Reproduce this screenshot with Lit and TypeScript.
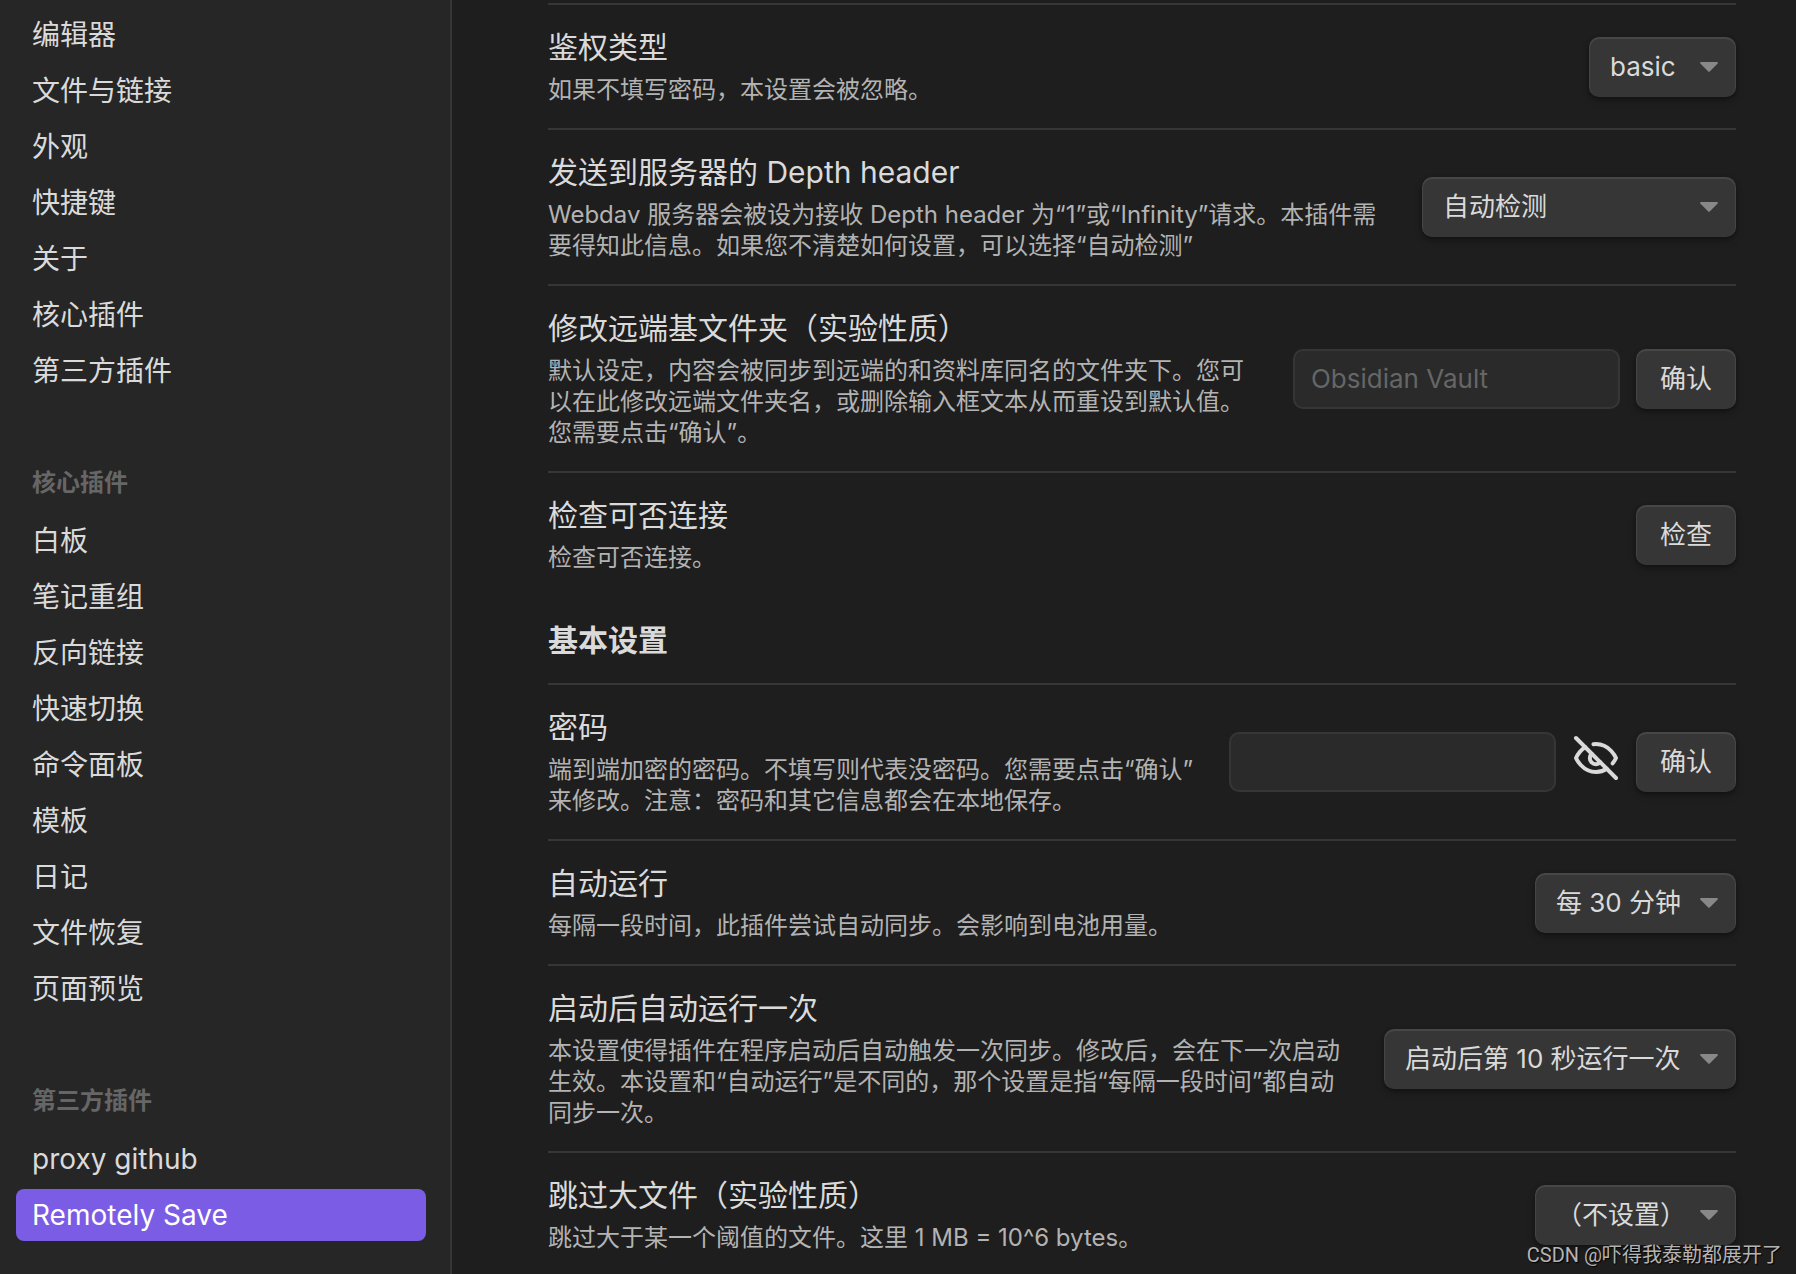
import { LitElement, html, css, svg, nothing, type TemplateResult } from "lit";
import { customElement, property } from "lit/decorators.js";

interface NavSection {
  title?: string;
  items: string[];
}

const NAV: NavSection[] = [
  { items: ["编辑器", "文件与链接", "外观", "快捷键", "关于", "核心插件", "第三方插件"] },
  {
    title: "核心插件",
    items: ["白板", "笔记重组", "反向链接", "快速切换", "命令面板", "模板", "日记", "文件恢复", "页面预览"],
  },
  { title: "第三方插件", items: ["proxy github", "Remotely Save"] },
];

const arrow = svg`<path d="M1 0h16a1 1 0 0 1 .7 1.6l-8 8a1 1 0 0 1-1.4 0l-8-8A1 1 0 0 1 1 0z" fill="#888888" />`;

@customElement("settings-nav")
class SettingsNav extends LitElement {
  @property() active = "";

  static styles = css`
    :host {
      display: block;
      box-sizing: border-box;
      padding: 9px 24px 32px 16px;
      background: #262626;
      border-right: 2px solid #363636;
      overflow: hidden;
    }
    .section + .section {
      margin-top: 70px;
    }
    .title {
      margin: 0 0 17px;
      padding: 0 16px;
      font-size: 24px;
      line-height: 31px;
      font-weight: 600;
      color: #666666;
    }
    .list {
      display: flex;
      flex-direction: column;
      gap: 4px;
      margin: 0;
      padding: 0;
      list-style: none;
    }
    .item {
      display: block;
      width: 100%;
      margin: 0;
      padding: 8px 16px;
      border: 0;
      border-radius: 8px;
      background: none;
      color: #dadada;
      font: inherit;
      font-size: 28px;
      line-height: 36px;
      text-align: left;
      cursor: pointer;
    }
    .item.active {
      background: #7a5ce5;
      color: #ffffff;
    }
  `;

  render() {
    return html`<nav>
      ${NAV.map(
        (section) => html`<div class="section">
          ${section.title ? html`<h2 class="title">${section.title}</h2>` : nothing}
          <ul class="list">
            ${section.items.map(
              (item) => html`<li>
                <button
                  class="item ${item === this.active ? "active" : ""}"
                  type="button"
                  aria-current=${item === this.active ? "page" : "false"}
                >${item}</button>
              </li>`
            )}
          </ul>
        </div>`
      )}
    </nav>`;
  }
}

@customElement("app-root")
class AppRoot extends LitElement {
  static styles = css`
    :host {
      display: grid;
      grid-template-columns: 452px minmax(0, 1fr);
      position: relative;
      height: 100vh;
      overflow: hidden;
      background: #1e1e1e;
      color: #dadada;
      font-family: Inter, "Noto Sans CJK SC", sans-serif;
      text-spacing-trim: space-all;
    }
    .content {
      padding: 3px 60px 0 96px;
      overflow: hidden;
    }
    .row {
      display: flex;
      align-items: center;
      gap: 32px;
      padding: 23px 0;
      border-top: 2px solid #363636;
    }
    .info {
      flex: 1;
      min-width: 0;
    }
    .name {
      display: block;
      font-size: 30px;
      line-height: 38px;
    }
    .desc {
      margin: 8px 0 0;
      font-size: 24px;
      line-height: 31px;
      color: #b3b3b3;
    }
    .heading {
      margin: 0;
      padding: 25px 0 23px;
      font-size: 30px;
      line-height: 39px;
      font-weight: 700;
    }
    .control {
      display: flex;
      align-items: center;
      gap: 16px;
    }
    .btn,
    .select {
      box-sizing: border-box;
      height: 60px;
      margin: 0;
      border: 0;
      border-radius: 10px;
      background: #363636;
      color: #dadada;
      font: inherit;
      font-size: 26px;
      line-height: 34px;
      box-shadow:
        inset 0 1px 1px 1px rgba(255, 255, 255, 0.09),
        0 4px 8px rgba(0, 0, 0, 0.15),
        0 2px 3px rgba(0, 0, 0, 0.1),
        0 2px 4px rgba(0, 0, 0, 0.2);
      cursor: pointer;
    }
    .btn {
      padding: 0 24px;
    }
    .dropdown {
      display: grid;
      align-items: center;
    }
    .dropdown > * {
      grid-area: 1 / 1;
    }
    .select {
      width: 100%;
      padding: 0 48px 0 21px;
      appearance: none;
    }
    .arrow {
      justify-self: end;
      width: 18px;
      height: 10px;
      margin-right: 18px;
      pointer-events: none;
    }
    .w-small {
      width: 147px;
    }
    .w-medium {
      width: 201px;
    }
    .w-large {
      width: 314px;
    }
    .w-xlarge {
      width: 352px;
    }
    .input {
      box-sizing: border-box;
      width: 327px;
      height: 60px;
      margin: 0;
      padding: 0 16px;
      border: 2px solid #363636;
      border-radius: 10px;
      background: #2a2a2a;
      color: #dadada;
      font: inherit;
      font-size: 26px;
    }
    .input::placeholder {
      color: #666666;
      opacity: 1;
    }
    .toggle {
      display: block;
      margin: 0 0 8px;
      padding: 0;
      border: 0;
      background: none;
      color: #dadada;
      cursor: pointer;
    }
    .eye {
      display: block;
      width: 48px;
      height: 48px;
    }
    .watermark {
      position: absolute;
      right: 14px;
      bottom: 6px;
      font-family: Roboto, "Noto Sans CJK SC", sans-serif;
      font-size: 20px;
      line-height: 26px;
      color: #b4b4b4;
      text-shadow: 1px 1px 1px #000000;
    }
  `;

  private row(id: string, name: string, desc: string, control: TemplateResult) {
    return html`<div class="row">
      <div class="info">
        <label class="name" for=${id}>${name}</label>
        <p class="desc">${desc}</p>
      </div>
      <div class="control">${control}</div>
    </div>`;
  }

  private dropdown(id: string, value: string, width: string) {
    return html`<div class="dropdown ${width}">
      <select class="select" id=${id}>
        <option>${value}</option>
      </select>
      <svg class="arrow" viewBox="0 0 18 10" aria-hidden="true">${arrow}</svg>
    </div>`;
  }

  render() {
    return html`
      <settings-nav lang="zh-CN" active="Remotely Save"></settings-nav>
      <main class="content" lang="zh-CN">
        ${this.row("auth", "鉴权类型", "如果不填写密码，本设置会被忽略。", this.dropdown("auth", "basic", "w-small"))}
        ${this.row(
          "depth",
          "发送到服务器的 Depth header",
          "Webdav 服务器会被设为接收 Depth header 为“1”或“Infinity”请求。本插件需要得知此信息。如果您不清楚如何设置，可以选择“自动检测”",
          this.dropdown("depth", "自动检测", "w-large")
        )}
        ${this.row(
          "folder",
          "修改远端基文件夹（实验性质）",
          "默认设定，内容会被同步到远端的和资料库同名的文件夹下。您可以在此修改远端文件夹名，或删除输入框文本从而重设到默认值。您需要点击“确认”。",
          html`<input class="input" id="folder" type="text" placeholder="Obsidian Vault" />
            <button class="btn" type="button">确认</button>`
        )}
        ${this.row(
          "check",
          "检查可否连接",
          "检查可否连接。",
          html`<button class="btn" id="check" type="button">检查</button>`
        )}
        <h2 class="heading">基本设置</h2>
        ${this.row(
          "password",
          "密码",
          "端到端加密的密码。不填写则代表没密码。您需要点击“确认”来修改。注意：密码和其它信息都会在本地保存。",
          html`<input class="input" id="password" type="password" />
            <button class="toggle" type="button" aria-label="显示密码" aria-pressed="false">
              <svg
                class="eye"
                viewBox="0 0 24 24"
                fill="none"
                stroke="currentColor"
                stroke-width="2"
                stroke-linecap="round"
                stroke-linejoin="round"
                aria-hidden="true"
              >
                <path d="M9.88 9.88a3 3 0 1 0 4.24 4.24" />
                <path d="M10.73 5.08A10.43 10.43 0 0 1 12 5c7 0 10 7 10 7a13.16 13.16 0 0 1-1.67 2.68" />
                <path d="M6.61 6.61A13.526 13.526 0 0 0 2 12s3 7 10 7a9.74 9.74 0 0 0 5.39-1.61" />
                <line x1="2" y1="2" x2="22" y2="22" />
              </svg>
            </button>
            <button class="btn" type="button">确认</button>`
        )}
        ${this.row(
          "interval",
          "自动运行",
          "每隔一段时间，此插件尝试自动同步。会影响到电池用量。",
          this.dropdown("interval", "每 30 分钟", "w-medium")
        )}
        ${this.row(
          "startup",
          "启动后自动运行一次",
          "本设置使得插件在程序启动后自动触发一次同步。修改后，会在下一次启动生效。本设置和“自动运行”是不同的，那个设置是指“每隔一段时间”都自动同步一次。",
          this.dropdown("startup", "启动后第 10 秒运行一次", "w-xlarge")
        )}
        ${this.row(
          "skip",
          "跳过大文件（实验性质）",
          "跳过大于某一个阈值的文件。这里 1 MB = 10^6 bytes。",
          this.dropdown("skip", "（不设置）", "w-medium")
        )}
      </main>
      <div class="watermark" lang="zh-CN">CSDN @吓得我泰勒都展开了</div>
    `;
  }
}
